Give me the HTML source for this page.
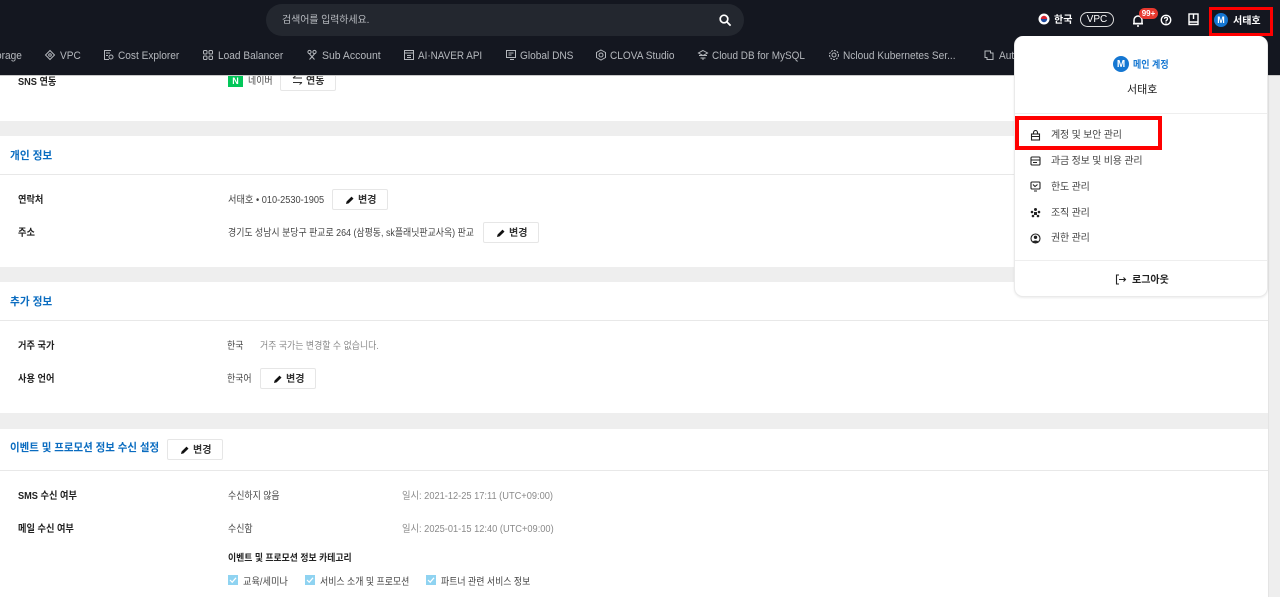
<!DOCTYPE html>
<html lang="ko"><head><meta charset="utf-8"><style>
*{box-sizing:border-box;margin:0;padding:0}
html,body{width:1280px;height:597px;overflow:hidden;background:#fff}
body{position:relative;font-family:"Liberation Sans","Noto Sans CJK KR",sans-serif;font-size:10px;color:#222}
.a{position:absolute}
.t{--s:1;position:absolute;white-space:nowrap;line-height:14px;transform-origin:left center;transform:translateY(-5px) scaleX(var(--s))}
.nav{--s:.92;color:#b5b8bd;font-size:11px}
.lb{--s:.92;font-weight:700;color:#222;font-size:10px}
.v{--s:.89;color:#444;font-size:10px}
.g{--s:.89;color:#8a8a8a;font-size:10px}
.h{--s:.97;color:#0a6cc0;font-weight:700;font-size:11px}
.band{position:absolute;left:0;width:1268px;background:#eeeeee}
.ln{position:absolute;left:0;width:1268px;height:1px;background:#e8e8e8}
.btn{position:absolute;width:56px;height:21px;background:#fff;border:1px solid #e6e6e6;border-radius:2px;font-size:10px;font-weight:700;color:#333;line-height:21px;white-space:nowrap}
.btn svg{position:absolute;left:12px;top:5px}
.btn span{position:absolute;left:25px;top:0}
.m{position:absolute;left:1051px;font-size:10px;color:#444;line-height:14px;transform:translateY(-5px);white-space:nowrap;letter-spacing:-.2px}
.ck{position:absolute;width:10px;height:10px;background:#8fd3f1}
.ni{position:absolute;top:49px}
</style></head><body>

<div class="band" style="top:121px;height:15px"></div>
<div class="band" style="top:267px;height:15px"></div>
<div class="band" style="top:413px;height:16px"></div>
<div class="a" style="left:1268px;top:75px;width:12px;height:522px;background:#eeeeee;border-left:1px solid #e4e4e4"></div>
<div class="ln" style="top:174px"></div>
<div class="ln" style="top:320px"></div>
<div class="ln" style="top:470px"></div>

<div class="t lb" style="left:18px;top:81px">SNS 연동</div>
<div class="a" style="left:228px;top:76px;width:15px;height:11px;background:#03c75a;color:#fff;font-size:9px;font-weight:700;text-align:center;line-height:10px">N</div>
<div class="t v" style="left:248px;top:80px">네이버</div>
<div class="a" style="left:280px;top:72px;width:56px;height:19px;background:#fff;border:1px solid #e6e6e6;border-radius:2px"></div>
<svg class="a" style="left:292px;top:75px" width="11" height="11" viewBox="0 0 11 11" fill="none" stroke="#333"><path d="M1 3h9M3.500 1L1 3M10 7.500H1M7.500 9.500l2.500-2"/></svg>
<div class="t" style="left:306px;top:80px;color:#333;font-weight:700">연동</div>

<div class="a" style="left:0;top:0;width:1280px;height:75px;background:#141720"></div>
<div class="a" style="left:0;top:75px;width:1280px;height:1px;background:#c9c9c9"></div>
<div class="a" style="left:266px;top:4px;width:478px;height:32px;border-radius:16px;background:#23272f"></div>
<div class="t" style="left:282px;top:19px;color:#b8bbc0;font-size:10px;letter-spacing:-.1px">검색어를 입력하세요.</div>
<svg class="a" style="left:718px;top:13px" width="14" height="14" viewBox="0 0 14 14" fill="none" stroke="#fff" stroke-width="1.7"><circle cx="6" cy="6" r="3.8"/><path d="M9 9l3.600 3.600"/></svg>

<div class="t nav" style="left:-4px;top:54px">orage</div>
<svg class="ni" style="left:44px" width="12" height="12" viewBox="0 0 12 12" fill="none" stroke="#b5b8bd"><path d="M6 1.500L10.500 6 6 10.500 1.500 6z"/><circle cx="6" cy="6" r="1.300"/></svg>
<div class="t nav" style="left:60px;top:54px">VPC</div>
<svg class="ni" style="left:103px" width="12" height="12" viewBox="0 0 12 12" fill="none" stroke="#b5b8bd"><path d="M8 1.500H1.500v9H6"/><path d="M3 4h4M3 6.500h2"/><circle cx="8" cy="8" r="2"/></svg>
<div class="t nav" style="left:118px;top:54px">Cost Explorer</div>
<svg class="ni" style="left:202px" width="12" height="12" viewBox="0 0 12 12" fill="none" stroke="#b5b8bd"><rect x="1.500" y="1.500" width="3.500" height="3.500" rx="1"/><rect x="7" y="1.500" width="3.500" height="3.500" rx="1"/><rect x="1.500" y="7" width="3.500" height="3.500" rx="1"/><rect x="7" y="7" width="3.500" height="3.500" rx="1"/></svg>
<div class="t nav" style="left:218px;top:54px">Load Balancer</div>
<svg class="ni" style="left:306px" width="12" height="12" viewBox="0 0 12 12" fill="none" stroke="#b5b8bd"><circle cx="3.500" cy="3" r="1.600"/><circle cx="8.500" cy="3" r="1.600"/><path d="M3.500 5l5 5.500M8.500 5l-5 5.500"/></svg>
<div class="t nav" style="--s:.95;left:322px;top:54px">Sub Account</div>
<svg class="ni" style="left:403px" width="12" height="12" viewBox="0 0 12 12" fill="none" stroke="#b5b8bd"><rect x="1.500" y="1.500" width="9" height="9"/><path d="M1.500 4h9M4 6.500h4M4 8.500h4"/></svg>
<div class="t nav" style="--s:.9;left:418px;top:54px">AI·NAVER API</div>
<svg class="ni" style="left:505px" width="12" height="12" viewBox="0 0 12 12" fill="none" stroke="#b5b8bd"><rect x="1.500" y="1.500" width="9" height="7"/><path d="M3.500 4h5M3.500 6h3M5 10.500h4"/></svg>
<div class="t nav" style="left:520px;top:54px">Global DNS</div>
<svg class="ni" style="left:595px" width="12" height="12" viewBox="0 0 12 12" fill="none" stroke="#b5b8bd"><path d="M6 1l4.500 2.500v5L6 11 1.500 8.500v-5z"/><circle cx="6" cy="6" r="2"/></svg>
<div class="t nav" style="left:610px;top:54px">CLOVA Studio</div>
<svg class="ni" style="left:697px" width="12" height="12" viewBox="0 0 12 12" fill="none" stroke="#b5b8bd"><path d="M6 1.500L10.500 4 6 6.500 1.500 4z"/><path d="M2 6.500h8M3.500 9h5M6 9v2"/></svg>
<div class="t nav" style="--s:.905;left:712px;top:54px">Cloud DB for MySQL</div>
<svg class="ni" style="left:828px" width="12" height="12" viewBox="0 0 12 12" fill="none" stroke="#b5b8bd"><circle cx="6" cy="6" r="4.500" stroke-dasharray="2 1"/><circle cx="6" cy="6" r="2"/></svg>
<div class="t nav" style="left:843px;top:54px">Ncloud Kubernetes Ser...</div>
<svg class="ni" style="left:983px" width="12" height="12" viewBox="0 0 12 12" fill="none" stroke="#b5b8bd"><path d="M2 2h5.500v2H10v6.500H4V8.500H2z"/></svg>
<div class="t nav" style="left:999px;top:54px">Auto</div>

<svg class="a" style="left:1038px;top:13px" width="12" height="12" viewBox="0 0 12 12"><circle cx="6" cy="6" r="5.500" fill="#fff"/><path d="M2.800 6a3.200 3.200 0 0 1 6.400 0z" fill="#d8232f"/><path d="M2.800 6a3.200 3.200 0 0 0 6.400 0z" fill="#1c4aa0"/></svg>
<div class="t" style="left:1054px;top:19px;color:#fff;font-weight:700;font-size:10px">한국</div>
<div class="a" style="left:1080px;top:12px;width:34px;height:15px;border:1px solid #ddd;border-radius:8px;color:#fff;font-size:10px;text-align:center;line-height:14px">VPC</div>
<svg class="a" style="left:1132px;top:14px" width="12" height="13" viewBox="0 0 12 13" fill="none" stroke="#fff" stroke-width="1.500"><path d="M2 9.500V6a4 4 0 0 1 8 0v3.500zM1 9.800h10"/><path d="M5 12h2"/></svg>
<div class="a" style="left:1139px;top:8px;width:19px;height:11px;border-radius:6px;background:#e8392f;color:#fff;font-size:8px;font-weight:700;text-align:center;line-height:11px">99+</div>
<svg class="a" style="left:1160px;top:14px" width="12" height="12" viewBox="0 0 12 12" fill="none" stroke="#fff" stroke-width="1.400"><circle cx="6" cy="6" r="4.700"/><path d="M4.500 4.800a1.500 1.500 0 1 1 2.300 1.300C6.200 6.500 6 6.800 6 7.500M6 8.500v1"/></svg>
<svg class="a" style="left:1188px;top:13px" width="11" height="13" viewBox="0 0 11 13" fill="none" stroke="#fff" stroke-width="1.400"><rect x="1" y="1" width="9" height="10.500"/><path d="M5.500 1v5M1 9h9"/></svg>
<div class="a" style="left:1209px;top:7px;width:64px;height:29px;border:3px solid #f00"></div>
<div class="a" style="left:1214px;top:13px;width:14px;height:14px;border-radius:50%;background:#1577d2;color:#fff;font-size:9px;font-weight:700;text-align:center;line-height:14px">M</div>
<div class="t" style="left:1233px;top:20px;color:#fff;font-weight:700;font-size:10px">서태호</div>

<div class="t h" style="left:10px;top:154px">개인 정보</div>
<div class="t lb" style="left:18px;top:199px">연락처</div>
<div class="t v" style="--s:.92;left:228px;top:199px">서태호 • 010-2530-1905</div>
<div class="btn" style="left:332px;top:189px"><svg width="10" height="10" viewBox="0 0 10 10"><path d="M1 9l.6-2.500L6.500 1.600l2 2-4.900 4.800z" fill="#111"/></svg><span>변경</span></div>
<div class="t lb" style="left:18px;top:232px">주소</div>
<div class="t v" style="left:228px;top:232px">경기도 성남시 분당구 판교로 264 (삼평동, sk플래닛판교사옥) 판교</div>
<div class="btn" style="left:483px;top:222px"><svg width="10" height="10" viewBox="0 0 10 10"><path d="M1 9l.6-2.500L6.500 1.600l2 2-4.900 4.800z" fill="#111"/></svg><span>변경</span></div>

<div class="t h" style="left:10px;top:300px">추가 정보</div>
<div class="t lb" style="left:18px;top:345px">거주 국가</div>
<div class="t v" style="left:227px;top:345px">한국</div>
<div class="t g" style="left:260px;top:345px">거주 국가는 변경할 수 없습니다.</div>
<div class="t lb" style="left:18px;top:378px">사용 언어</div>
<div class="t v" style="left:227px;top:378px">한국어</div>
<div class="btn" style="left:260px;top:368px"><svg width="10" height="10" viewBox="0 0 10 10"><path d="M1 9l.6-2.500L6.500 1.600l2 2-4.900 4.800z" fill="#111"/></svg><span>변경</span></div>

<div class="t h" style="--s:.95;left:10px;top:446px">이벤트 및 프로모션 정보 수신 설정</div>
<div class="btn" style="left:167px;top:439px"><svg width="10" height="10" viewBox="0 0 10 10"><path d="M1 9l.6-2.500L6.500 1.600l2 2-4.900 4.800z" fill="#111"/></svg><span>변경</span></div>
<div class="t lb" style="left:18px;top:495px">SMS 수신 여부</div>
<div class="t v" style="left:228px;top:495px">수신하지 않음</div>
<div class="t g" style="--s:.926;left:402px;top:495px">일시: 2021-12-25 17:11 (UTC+09:00)</div>
<div class="t lb" style="left:18px;top:528px">메일 수신 여부</div>
<div class="t v" style="left:228px;top:528px">수신함</div>
<div class="t g" style="--s:.926;left:402px;top:528px">일시: 2025-01-15 12:40 (UTC+09:00)</div>
<div class="t" style="--s:.93;left:228px;top:557px;color:#222;font-weight:700;font-size:9.500px">이벤트 및 프로모션 정보 카테고리</div>
<svg class="ck" style="left:228px;top:575px" viewBox="0 0 10 10" fill="none" stroke="#fff" stroke-width="1.200"><path d="M2 5l2.200 2.200L8 2.800"/></svg>
<div class="t v" style="--s:.92;left:243px;top:581px">교육/세미나</div>
<svg class="ck" style="left:305px;top:575px" viewBox="0 0 10 10" fill="none" stroke="#fff" stroke-width="1.200"><path d="M2 5l2.200 2.200L8 2.800"/></svg>
<div class="t v" style="left:320px;top:581px">서비스 소개 및 프로모션</div>
<svg class="ck" style="left:426px;top:575px" viewBox="0 0 10 10" fill="none" stroke="#fff" stroke-width="1.200"><path d="M2 5l2.200 2.200L8 2.800"/></svg>
<div class="t v" style="left:441px;top:581px">파트너 관련 서비스 정보</div>

<div class="a" style="left:1014px;top:36px;width:254px;height:261px;background:#fff;border-radius:9px;border:1px solid #eaeaea;border-top:0;box-shadow:0 1px 2px rgba(0,0,0,.08)"></div>
<div class="a" style="left:1113px;top:56px;width:16px;height:16px;border-radius:50%;background:#1577d2;color:#fff;font-size:10px;font-weight:700;text-align:center;line-height:17px">M</div>
<div class="t" style="--s:.9;left:1133px;top:64px;color:#1577d2;font-size:10px;font-weight:700">메인 계정</div>
<div class="t" style="left:1127px;top:88px;color:#222;font-size:11px">서태호</div>
<div class="a" style="left:1015px;top:113px;width:252px;height:1px;background:#eeeeee"></div>
<div class="a" style="left:1015px;top:116px;width:147px;height:34px;border:4px solid #f00"></div>

<svg class="a" style="left:1030px;top:130px" width="11" height="11" viewBox="0 0 11 11" fill="none" stroke="#222" stroke-width="1.100"><rect x="1.500" y="4" width="8" height="6"/><path d="M3.500 4V2.500a2 2 0 0 1 4 0V4M1.500 6.500h8"/></svg>
<div class="m" style="top:134px">계정 및 보안 관리</div>
<svg class="a" style="left:1030px;top:156px" width="11" height="10" viewBox="0 0 11 10" fill="none" stroke="#222" stroke-width="1.100"><rect x="1" y="1" width="9" height="8" rx="1"/><path d="M1 4h9M3 6.500h4"/></svg>
<div class="m" style="top:160px">과금 정보 및 비용 관리</div>
<svg class="a" style="left:1030px;top:181px" width="11" height="11" viewBox="0 0 11 11" fill="none" stroke="#222" stroke-width="1.100"><rect x="1" y="1" width="9" height="7" rx="1"/><path d="M3 3.500l2 2 2.500-2M4 10h3"/></svg>
<div class="m" style="top:186px">한도 관리</div>
<svg class="a" style="left:1030px;top:207px" width="11" height="11" viewBox="0 0 11 11" fill="#222"><circle cx="5.500" cy="2.500" r="1.500"/><circle cx="2" cy="5" r="1.300"/><circle cx="9" cy="5" r="1.300"/><circle cx="3" cy="9" r="1.300"/><circle cx="8" cy="9" r="1.300"/><rect x="4" y="5" width="3" height="3"/></svg>
<div class="m" style="top:212px">조직 관리</div>
<svg class="a" style="left:1030px;top:233px" width="11" height="11" viewBox="0 0 11 11"><circle cx="5.500" cy="5.500" r="4.500" fill="none" stroke="#222" stroke-width="1.100"/><circle cx="5.500" cy="4.300" r="1.700" fill="#222"/><path d="M2.500 9c.5-2 5.500-2 6 0l-3 1.500z" fill="#222"/></svg>
<div class="m" style="top:237px">권한 관리</div>
<div class="a" style="left:1015px;top:260px;width:252px;height:1px;background:#eeeeee"></div>
<svg class="a" style="left:1115px;top:274px" width="12" height="11" viewBox="0 0 12 11" fill="none" stroke="#222" stroke-width="1.100"><path d="M4 1H1.500v9H4M4 5.500h6.500M8.500 3.500l2 2-2 2"/></svg>
<div class="t" style="left:1132px;top:279px;color:#222;font-size:10px;font-weight:700">로그아웃</div>

</body></html>
